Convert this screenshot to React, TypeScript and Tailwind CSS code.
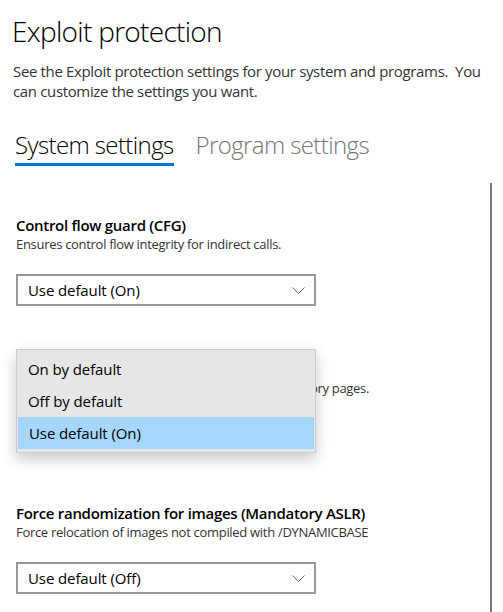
import type { ReactNode } from 'react';

function Chevron() {
  return (
    <svg width="13" height="7" viewBox="0 0 13 7" className="shrink-0">
      <polyline points="0.5,0.5 6.5,6.5 12.5,0.5" fill="none" stroke="#666" strokeWidth="1" />
    </svg>
  );
}

function Select({ value }: { value: string }) {
  return (
    <div className="flex h-[32px] w-[300px] items-center justify-between border-2 border-[#999] bg-white pl-[10px] pr-[9px] text-[15px] tracking-[-0.1px] text-black">
      <span>{value}</span>
      <Chevron />
    </div>
  );
}

interface SectionProps {
  title: string;
  description: string;
  children: ReactNode;
}

function Section({ title, description, children }: SectionProps) {
  return (
    <div className="pb-[53px]">
      <h3 className="text-[15px] font-semibold leading-[20px] tracking-[-0.3px] text-black">{title}</h3>
      <p className="text-[13px] leading-[18px] tracking-[-0.3px] text-[#333]">{description}</p>
      <div className="mt-[21px]">{children}</div>
    </div>
  );
}

const options = ['On by default', 'Off by default', 'Use default (On)'];

export default function App() {
  return (
    <div className="h-[612px] w-[503px] overflow-hidden bg-white font-['Open_Sans','Noto_Sans',sans-serif] text-black">
      <div className="pl-3 pt-[13px]">
        <h1 className="text-[28px] font-light leading-[36px] tracking-[-0.7px]">Exploit protection</h1>
        <p className="mt-[12px] pl-px text-[15px] leading-[20px] tracking-[-0.35px] text-[#333]">
          See the Exploit protection settings for your system and programs.{'\u00a0'} You
          <br />
          can customize the settings you want.
        </p>
        <div className="mt-[28px] flex items-start gap-[22px] pl-[3px] text-[24px] font-light leading-[32px] tracking-[-0.6px]">
          <span className="border-b-[3px] border-[#0078d7] pb-[2px] text-black">System settings</span>
          <span className="text-[#767676]">Program settings</span>
        </div>
      </div>

      <div className="mt-[17px] flex">
        <div className="w-[490px] pl-[16px] pt-[32px]">
          <Section title="Control flow guard (CFG)" description="Ensures control flow integrity for indirect calls.">
            <Select value="Use default (On)" />
          </Section>

          <Section
            title="Data Execution Prevention (DEP)"
            description="Prevents code from being run from data-only memory pages."
          >
            <div className="relative">
              <Select value="Use default (On)" />
              <div className="absolute left-0 top-[-69px] w-[300px] border border-[#ccc] bg-[#e6e6e6] py-[3px] shadow-[0_6px_14px_rgba(0,0,0,0.22)]">
                {options.map((opt, idx) => (
                  <div
                    key={opt}
                    className={`flex h-[32px] items-center pl-[11px] text-[15px] tracking-[-0.1px] text-black ${
                      idx === 2 ? 'mx-px bg-[#a6d6fb]' : ''
                    }`}
                  >
                    {opt}
                  </div>
                ))}
              </div>
            </div>
          </Section>

          <Section
            title="Force randomization for images (Mandatory ASLR)"
            description="Force relocation of images not compiled with /DYNAMICBASE"
          >
            <Select value="Use default (Off)" />
          </Section>
        </div>
        <div className="h-[440px] w-[2px] bg-[#777]" />
      </div>
    </div>
  );
}
